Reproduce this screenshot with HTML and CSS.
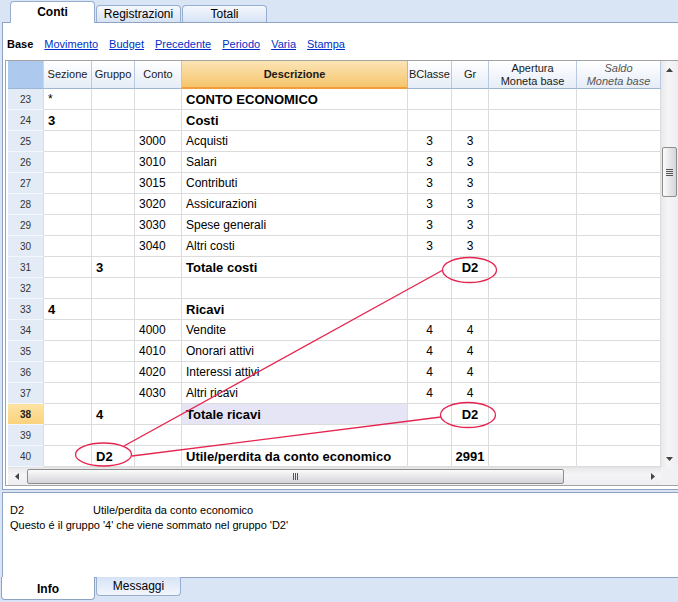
FILE: index.html
```html
<!DOCTYPE html>
<html lang="it">
<head>
  <meta charset="UTF-8">
  <title>Conti</title>
  <link rel="stylesheet" href="styles.css">
</head>
<body>
  <!-- tab superiori -->
  <div class="tabs">
    <div class="tab active">Conti</div>
    <div class="tab">Registrazioni</div>
    <div class="tab">Totali</div>
  </div>

  <div class="panel">
    <div class="subnav">
      <b>Base</b>
      <a href="#">Movimento</a>
      <a href="#">Budget</a>
      <a href="#">Precedente</a>
      <a href="#">Periodo</a>
      <a href="#">Varia</a>
      <a href="#">Stampa</a>
    </div>

    <div class="frame">
      <div class="grid-row">
        <table class="grid">
          <colgroup>
            <col style="width:36px"><col style="width:48px"><col style="width:43px"><col style="width:47px">
            <col style="width:226px"><col style="width:44px"><col style="width:37px"><col style="width:88px"><col style="width:84px">
          </colgroup>
          <tr class="head">
            <th class="corner-cell"></th>
            <th>Sezione</th>
            <th>Gruppo</th>
            <th>Conto</th>
            <th class="desc-head">Descrizione</th>
            <th>BClasse</th>
            <th>Gr</th>
            <th>Apertura<br>Moneta base</th>
            <th class="it">Saldo<br>Moneta base</th>
          </tr>
          <tr><td class="rn">23</td><td>*</td><td></td><td></td><td class="b">CONTO ECONOMICO</td><td></td><td></td><td></td><td></td></tr>
          <tr><td class="rn">24</td><td class="b">3</td><td></td><td></td><td class="b">Costi</td><td></td><td></td><td></td><td></td></tr>
          <tr><td class="rn">25</td><td></td><td></td><td>3000</td><td>Acquisti</td><td class="c">3</td><td class="c">3</td><td></td><td></td></tr>
          <tr><td class="rn">26</td><td></td><td></td><td>3010</td><td>Salari</td><td class="c">3</td><td class="c">3</td><td></td><td></td></tr>
          <tr><td class="rn">27</td><td></td><td></td><td>3015</td><td>Contributi</td><td class="c">3</td><td class="c">3</td><td></td><td></td></tr>
          <tr><td class="rn">28</td><td></td><td></td><td>3020</td><td>Assicurazioni</td><td class="c">3</td><td class="c">3</td><td></td><td></td></tr>
          <tr><td class="rn">29</td><td></td><td></td><td>3030</td><td>Spese generali</td><td class="c">3</td><td class="c">3</td><td></td><td></td></tr>
          <tr><td class="rn">30</td><td></td><td></td><td>3040</td><td>Altri costi</td><td class="c">3</td><td class="c">3</td><td></td><td></td></tr>
          <tr><td class="rn">31</td><td></td><td class="b">3</td><td></td><td class="b">Totale costi</td><td></td><td class="c b">D2</td><td></td><td></td></tr>
          <tr><td class="rn">32</td><td></td><td></td><td></td><td></td><td></td><td></td><td></td><td></td></tr>
          <tr><td class="rn">33</td><td class="b">4</td><td></td><td></td><td class="b">Ricavi</td><td></td><td></td><td></td><td></td></tr>
          <tr><td class="rn">34</td><td></td><td></td><td>4000</td><td>Vendite</td><td class="c">4</td><td class="c">4</td><td></td><td></td></tr>
          <tr><td class="rn">35</td><td></td><td></td><td>4010</td><td>Onorari attivi</td><td class="c">4</td><td class="c">4</td><td></td><td></td></tr>
          <tr><td class="rn">36</td><td></td><td></td><td>4020</td><td>Interessi attivi</td><td class="c">4</td><td class="c">4</td><td></td><td></td></tr>
          <tr><td class="rn">37</td><td></td><td></td><td>4030</td><td>Altri ricavi</td><td class="c">4</td><td class="c">4</td><td></td><td></td></tr>
          <tr class="sel"><td class="rn">38</td><td></td><td class="b">4</td><td></td><td class="b hl">Totale ricavi</td><td></td><td class="c b">D2</td><td></td><td></td></tr>
          <tr><td class="rn">39</td><td></td><td></td><td></td><td></td><td></td><td></td><td></td><td></td></tr>
          <tr><td class="rn">40</td><td></td><td class="b">D2</td><td></td><td class="b">Utile/perdita da conto economico</td><td></td><td class="c b">2991</td><td></td><td></td></tr>
        </table>

        <!-- barra di scorrimento verticale -->
        <div class="vscroll">
          <div class="arrow">
            <svg width="7" height="4" viewBox="0 0 7 4"><path d="M0 4 L3.5 0 L7 4 Z" fill="#444"/></svg>
          </div>
          <div class="vtrack">
            <div class="vthumb"><span></span><span></span><span></span><span></span></div>
          </div>
          <div class="arrow">
            <svg width="7" height="4" viewBox="0 0 7 4"><path d="M0 0 L3.5 4 L7 0 Z" fill="#444"/></svg>
          </div>
        </div>
      </div>

      <!-- barra di scorrimento orizzontale -->
      <div class="hscroll-row">
        <div class="hscroll">
          <div class="harrow">
            <svg width="4" height="7" viewBox="0 0 4 7"><path d="M4 0 L0 3.5 L4 7 Z" fill="#444"/></svg>
          </div>
          <div class="hthumb"><span></span><span></span><span></span></div>
          <div class="hspace"></div>
          <div class="harrow">
            <svg width="4" height="7" viewBox="0 0 4 7"><path d="M0 0 L4 3.5 L0 7 Z" fill="#444"/></svg>
          </div>
        </div>
        <div class="scroll-corner"></div>
      </div>
    </div>
  </div>

  <!-- pannello info -->
  <div class="info">
    <div class="info-line"><span class="info-key">D2</span>Utile/perdita da conto economico</div>
    <div class="info-line">Questo é il gruppo '4' che viene sommato nel gruppo 'D2'</div>
  </div>
  <div class="btabs">
    <div class="btab active">Info</div>
    <div class="btab">Messaggi</div>
  </div>

  <!-- segni rossi sopra la griglia -->
  <svg class="marks" width="678" height="602" viewBox="0 0 678 602">
    <g fill="none" stroke="#e5244f" stroke-width="1.3">
      <ellipse cx="469.5" cy="270" rx="27" ry="12.5"/>
      <ellipse cx="468" cy="415" rx="27.5" ry="12.5"/>
      <ellipse cx="103.5" cy="454.5" rx="28" ry="11.5"/>
      <line x1="124" y1="446" x2="443" y2="270"/>
      <line x1="132" y1="456" x2="441" y2="417"/>
    </g>
  </svg>
</body>
</html>
```
FILE: styles.css
```css
* {
  box-sizing: border-box;
}

body {
  margin: 0;
  width: 678px;
  height: 602px;
  overflow: hidden;
  position: relative;
  background: #d9e5f4;
  font-family: "Liberation Sans", Arial, sans-serif;
  color: #000;
}

/* tab superiori */
.tabs {
  display: flex;
  align-items: flex-end;
  height: 22px;
  padding-left: 10px;
}

.tab {
  width: 85px;
  height: 17px;
  margin-right: 1px;
  border: 1px solid #98aed0;
  border-bottom: none;
  border-radius: 4px 4px 0 0;
  background: linear-gradient(#f5f8fd, #d6e3f6);
  font-size: 12px;
  line-height: 16px;
  text-align: center;
}

.tab.active {
  height: 22px;
  margin-bottom: -1px;
  position: relative;
  z-index: 1;
  background: #fff;
  font-weight: bold;
  line-height: 20px;
}

/* pannello principale */
.panel {
  margin-left: 2px;
  border: 1px solid #8ea3c2;
  border-right: none;
  background: #fff;
  padding: 0 0 3px 2px;
}

.subnav {
  display: flex;
  gap: 11px;
  padding: 14px 0 0 2px;
  height: 28px;
  font-size: 11px;
  line-height: 14px;
}

.subnav a {
  color: #0030c8;
  text-decoration: underline;
}

.frame {
  margin-top: 9px;
  border: 1px solid #a3a3a3;
  border-right: none;
  padding-left: 2px;
}

.grid-row {
  display: flex;
}

/* griglia */
.grid {
  width: 653px;
  table-layout: fixed;
  border-collapse: separate;
  border-spacing: 0;
  font-size: 12px;
}

.grid tr {
  height: 21px;
}

.grid tr.head {
  height: 28px;
}

.grid th {
  padding: 0;
  font-size: 11px;
  font-weight: normal;
  line-height: 13px;
  color: #1a1a1a;
  background: linear-gradient(#ffffff, #e6edf7);
  border-right: 1px solid #b8c9e0;
  border-bottom: 1px solid #9fb5d4;
  text-align: center;
}

.grid th.corner-cell {
  background: #adc9ee;
  border-right: 1px solid #c9d7ea;
}

.grid th.desc-head {
  font-weight: bold;
  background: linear-gradient(#fbe4b6, #f6c56c);
  border-right: 1px solid #e9b25e;
  border-bottom: 2px solid #f19d3a;
}

.grid th.it {
  font-style: italic;
  color: #555;
}

.grid td {
  padding: 0 3px 0 4px;
  border-right: 1px solid #dcdcdc;
  border-bottom: 1px solid #dcdcdc;
  white-space: nowrap;
  overflow: hidden;
}

.grid td.rn {
  padding: 0;
  font-size: 10px;
  color: #333;
  text-align: center;
  background: #e3ebf6;
  border-right: 1px solid #d3deec;
  border-bottom: 1px solid #f3f6fb;
}

.grid td.b {
  font-weight: bold;
  font-size: 13px;
}

.grid td.c {
  text-align: center;
  padding: 0;
}

.grid tr.sel td.rn {
  background: linear-gradient(#fde3a4, #fbd27c);
  font-weight: bold;
  color: #222;
}

.grid td.hl {
  background: #e5e5f5;
}

/* scorrimento verticale */
.vscroll {
  width: 17px;
  display: flex;
  flex-direction: column;
  background: linear-gradient(90deg, #e8e7ea, #f5f4f6 40%, #efedf1);
}

.vscroll .arrow {
  height: 17px;
  display: flex;
  align-items: center;
  justify-content: center;
}

.vtrack {
  flex: 1;
  padding-left: 1px;
}

.vthumb {
  margin-top: 69px;
  width: 15px;
  height: 50px;
  border: 1px solid #8d8d8d;
  border-radius: 2px;
  background: linear-gradient(90deg, #fbfbfb, #e4e4e8 60%, #d4d4da);
  display: flex;
  flex-direction: column;
  align-items: center;
  justify-content: center;
  gap: 1px;
}

.vthumb span {
  width: 7px;
  height: 1px;
  background: #555;
}

/* scorrimento orizzontale */
.hscroll-row {
  display: flex;
  height: 18px;
}

.hscroll {
  width: 653px;
  display: flex;
  align-items: center;
  background: linear-gradient(#e9e8eb, #f5f4f6 40%, #efedf1);
  border-top: 1px solid #e2e2e2;
}

.harrow {
  width: 17px;
  display: flex;
  justify-content: center;
}

.hthumb {
  width: 537px;
  height: 15px;
  margin-left: 2px;
  border: 1px solid #8d8d8d;
  border-radius: 2px;
  background: linear-gradient(#fbfbfb, #e4e4e8 60%, #d4d4da);
  display: flex;
  align-items: center;
  justify-content: center;
  gap: 1px;
}

.hthumb span {
  width: 1px;
  height: 7px;
  background: #555;
}

.hspace {
  flex: 1;
}

.scroll-corner {
  width: 17px;
  background: #f1f0f3;
}

/* pannello info */
.info {
  margin: 2px 0 0 2px;
  height: 86px;
  border: 1px solid #8ea3c2;
  border-right: none;
  background: #fff;
  padding: 10px 0 0 7px;
  font-size: 11px;
  line-height: 15px;
}

.info-key {
  display: inline-block;
  width: 83px;
}

.btabs {
  display: flex;
  padding-left: 1px;
}

.btab {
  width: 85px;
  height: 19px;
  margin-top: -1px;
  margin-right: 1px;
  border: 1px solid #98aed0;
  border-top: none;
  border-radius: 0 0 4px 4px;
  background: linear-gradient(#d6e3f6, #f2f6fc);
  font-size: 12px;
  line-height: 18px;
  text-align: center;
}

.btab.active {
  width: 94px;
  height: 23px;
  background: #fff;
  border-color: #8ea3c2;
  font-weight: bold;
  line-height: 24px;
  position: relative;
  z-index: 1;
}

/* segni */
.marks {
  position: absolute;
  top: 0;
  left: 0;
  pointer-events: none;
}
```
